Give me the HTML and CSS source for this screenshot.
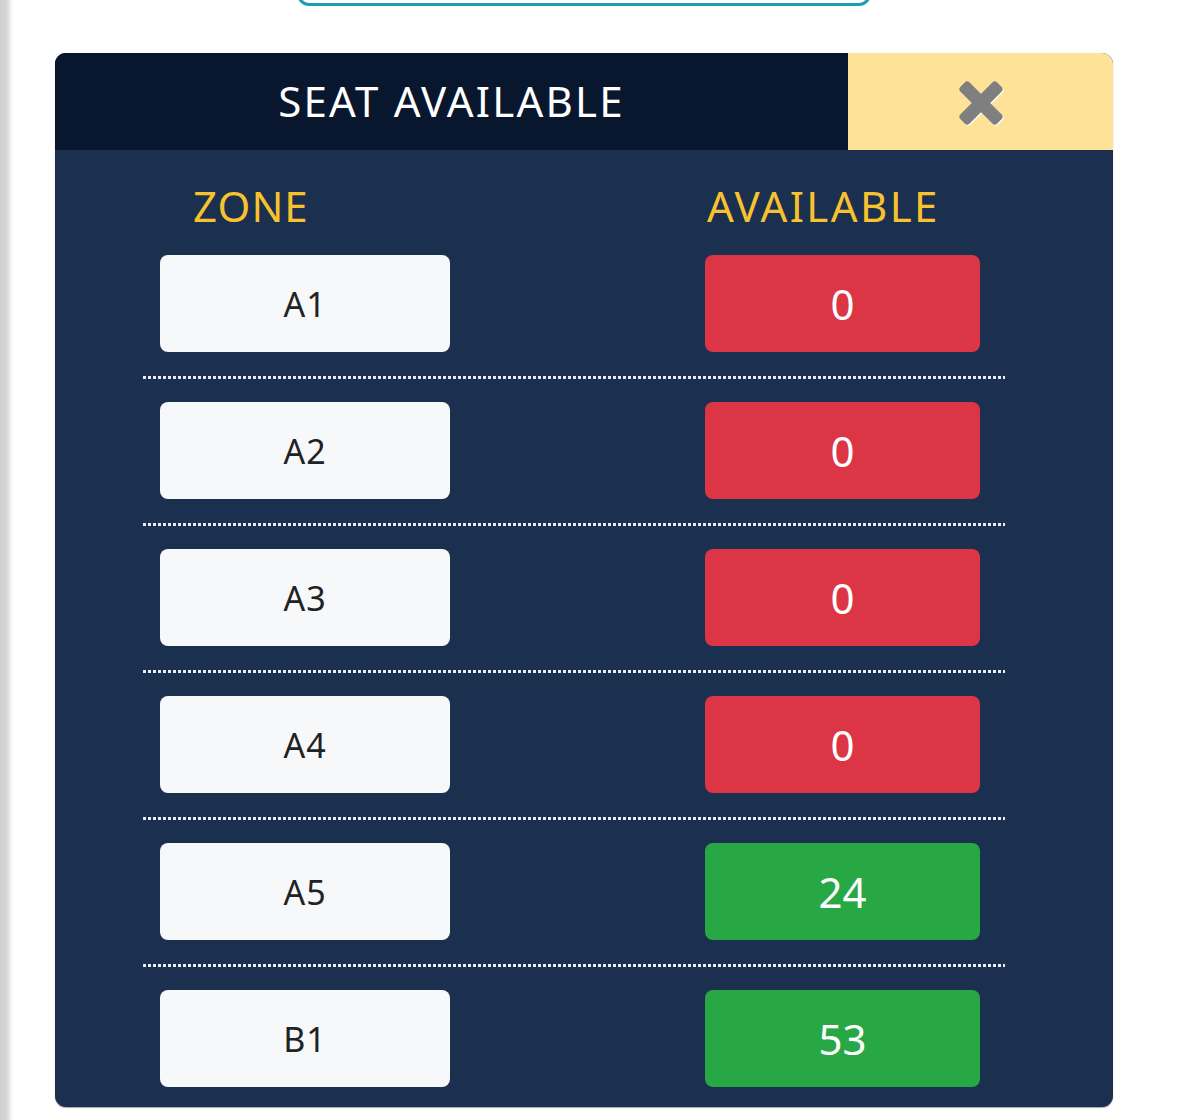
FILE: index.html
```html
<!DOCTYPE html>
<html lang="en">
<head>
<meta charset="utf-8">
<title>Seat Available</title>
<link rel="stylesheet" href="styles.css">
</head>
<body>
<div class="page">
  <div class="top-btn"></div>
  <section class="card">
    <header class="card-head">
      <h1 class="card-title">SEAT AVAILABLE</h1>
      <button class="close-btn" aria-label="Close">
        <svg width="56" height="56" viewBox="0 0 56 56" aria-hidden="true">
          <g transform="translate(29 29)">
            <rect x="-26" y="-6.5" width="52" height="13" rx="3.5" fill="#ffffff" transform="rotate(45)"/>
            <rect x="-26" y="-6.5" width="52" height="13" rx="3.5" fill="#ffffff" transform="rotate(-45)"/>
          </g>
          <g transform="translate(28 28)">
            <rect x="-26" y="-6.5" width="52" height="13" rx="3.5" fill="#7f7f7f" transform="rotate(45)"/>
            <rect x="-26" y="-6.5" width="52" height="13" rx="3.5" fill="#7f7f7f" transform="rotate(-45)"/>
          </g>
        </svg>
      </button>
    </header>
    <div class="card-body">
      <div class="head-row">
        <div class="th th-zone">ZONE</div>
        <div class="th th-avail">AVAILABLE</div>
      </div>
      <div class="row">
        <div class="zone">A1</div>
        <div class="avail red">0</div>
      </div>
      <div class="row">
        <div class="zone">A2</div>
        <div class="avail red">0</div>
      </div>
      <div class="row">
        <div class="zone">A3</div>
        <div class="avail red">0</div>
      </div>
      <div class="row">
        <div class="zone">A4</div>
        <div class="avail red">0</div>
      </div>
      <div class="row">
        <div class="zone">A5</div>
        <div class="avail green">24</div>
      </div>
      <div class="row last">
        <div class="zone">B1</div>
        <div class="avail green">53</div>
      </div>
    </div>
  </section>
</div>
</body>
</html>
```

FILE: styles.css
```css
html, body {
  margin: 0;
  padding: 0;
}
body {
  background: linear-gradient(to right, #cfcfcf 0px, #d6d6d6 7px, #f4f4f4 11px, #ffffff 14px);
  font-family: "Noto Sans", "Open Sans", sans-serif;
  height: 1120px;
  overflow: hidden;
}
.page {
  padding-left: 55px;
}
.top-btn {
  box-sizing: border-box;
  width: 574px;
  height: 40px;
  margin-top: -34px;
  margin-left: 242px;
  border: 3px solid #1f9db1;
  border-radius: 12px;
  background: #ffffff;
}
.card {
  width: 1058px;
  height: 1054px;
  margin-top: 47px;
  background: #1b2f4f;
  border-radius: 11px;
  overflow: hidden;
  box-shadow: 0 1px 1px rgba(0,0,0,0.35);
}
.card-head {
  display: grid;
  grid-template-columns: 793px 265px;
  height: 97px;
}
.card-title {
  margin: 0;
  background: #08172d;
  color: #ffffff;
  font-weight: 400;
  font-size: 42px;
  letter-spacing: 2.2px;
  display: flex;
  align-items: center;
  justify-content: center;
  padding-bottom: 2px;
}
.close-btn {
  border: 0;
  padding: 0;
  margin: 0;
  background: #fde298;
  display: flex;
  align-items: center;
  justify-content: center;
}
.close-btn svg {
  display: block;
  margin-left: 0;
  margin-top: 2px;
}
.card-body {
  padding: 31px 108px 20px 88px;
}
.head-row {
  display: grid;
  grid-template-columns: 562px 296px;
  margin-bottom: 24px;
}
.th {
  color: #f8c22f;
  font-size: 42px;
  line-height: 50px;
  white-space: nowrap;
}
.th-zone {
  padding-left: 50px;
  letter-spacing: 1px;
}
.th-avail {
  padding-left: 2px;
  letter-spacing: 2.4px;
}
.row {
  display: grid;
  grid-template-columns: 562px 275px;
  padding: 0 0 27px;
  margin-bottom: 23px;
  background-image: linear-gradient(to right, #e9edf3 0, #e9edf3 3px, transparent 3px, transparent 5px);
  background-size: 5px 3px;
  background-repeat: repeat-x;
  background-position: left bottom;
}
.row.last {
  background: none;
  margin-bottom: 0;
  padding-bottom: 0;
}
.zone,
.avail {
  height: 97px;
  border-radius: 8px;
  display: flex;
  align-items: center;
  justify-content: center;
}
.zone {
  width: 290px;
  margin-left: 17px;
  background: #f6f8fa;
  color: #222222;
  font-size: 34px;
  letter-spacing: 1px;
}
.avail {
  width: 275px;
  color: #ffffff;
  font-size: 42px;
}
.red {
  background: #dc3545;
}
.green {
  background: #28a745;
}
```
